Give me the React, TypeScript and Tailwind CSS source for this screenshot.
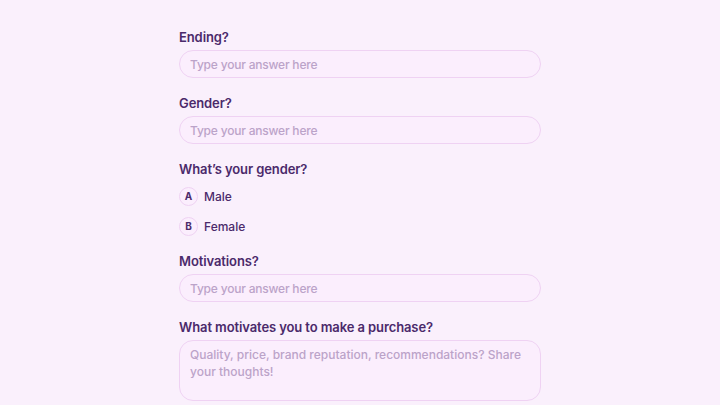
export default function App() {
  return (
    <div
      className="min-h-[405px] w-full bg-[#faf0fc] text-[#4b2a6b]"
      style={{ fontFamily: "Inter, 'Noto Sans', sans-serif" }}
    >
      <div className="mx-auto flex w-[362px] flex-col pt-[27px]">
        {/* ENDING */}
        <Field label="Ending?">
          <TextInput placeholder="Type your answer here" />
        </Field>

        {/* GENDER */}
        <Field label="Gender?">
          <TextInput placeholder="Type your answer here" />
        </Field>

        {/* WHAT'S YOUR GENDER */}
        <Field label="What’s your gender?">
          <div className="flex flex-col gap-[11px] pt-[5px]">
            <Option letter="A" text="Male" />
            <Option letter="B" text="Female" />
          </div>
        </Field>

        {/* MOTIVATIONS */}
        <Field label="Motivations?">
          <TextInput placeholder="Type your answer here" />
        </Field>

        {/* PURCHASE */}
        <Field label="What motivates you to make a purchase?">
          <textarea
            placeholder="Quality, price, brand reputation, recommendations? Share your thoughts!"
            className="h-[61px] w-full resize-none rounded-[14px] border border-[#efd2f3] bg-[#fbeefd] px-[10px] py-[5px] text-[12px] font-medium leading-[17px] text-[#4b2a6b] placeholder:text-[#bba3c9] outline-none"
          />
        </Field>
      </div>
    </div>
  );
}

/* ---------- SMALL UI HELPERS ---------- */

function Field({ label, children }: any) {
  return (
    <div className="mb-[15px] flex flex-col gap-[3px]">
      <p className="text-[13px] font-semibold leading-[20px] tracking-[-0.1px]">
        {label}
      </p>
      {children}
    </div>
  );
}

function TextInput({ placeholder }: { placeholder: string }) {
  return (
    <input
      placeholder={placeholder}
      className="h-[28px] w-full rounded-full border border-[#efd2f3] bg-[#fbeefd] px-[10px] text-[12px] font-medium tracking-[-0.2px] text-[#4b2a6b] placeholder:text-[#bba3c9] outline-none"
    />
  );
}

function Option({ letter, text }: { letter: string; text: string }) {
  return (
    <div className="flex items-center gap-[6px]">
      <span className="flex h-[19px] w-[19px] items-center justify-center rounded-full border border-[#efd2f3] bg-[#fbeefd] text-[10px] font-bold">
        {letter}
      </span>
      <span className="text-[12px] font-medium">{text}</span>
    </div>
  );
}
